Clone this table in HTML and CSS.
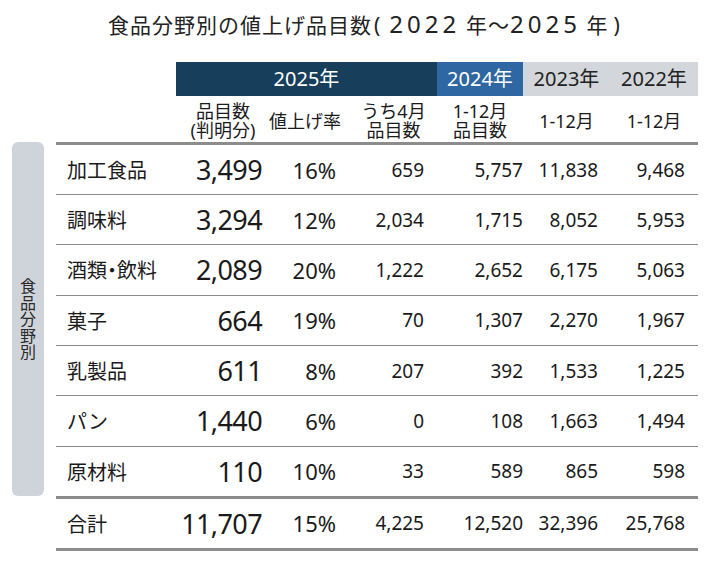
FILE: index.html
```html
<!DOCTYPE html>
<html lang="ja">
<head>
<meta charset="utf-8">
<title>食品分野別の値上げ品目数</title>
<link rel="stylesheet" href="styles.css">
</head>
<body>
<h1 class="title">食品分野別の値上げ品目数<span class="paren">(</span><span class="tnum">2022</span> 年～<span class="tnum">2025</span> 年<span class="paren">)</span></h1>
<div class="table">
  <div class="side"><span class="side-text">食品分野別</span></div>

  <div class="blank"></div>
  <div class="band band-dark">2025年</div>
  <div class="band band-blue">2024年</div>
  <div class="band band-gray">2023年</div>
  <div class="band band-gray">2022年</div>

  <div class="blank"></div>
  <div class="sub">品目数<br>(判明分)</div>
  <div class="sub sub-rate">値上げ率</div>
  <div class="sub">うち4月<br>品目数</div>
  <div class="sub">1-12月<br>品目数</div>
  <div class="sub">1-12月</div>
  <div class="sub">1-12月</div>

  <div class="cell label first">加工食品</div>
  <div class="cell big c1 first">3,499</div>
  <div class="cell pct c2 first">16%</div>
  <div class="cell num c3 first">659</div>
  <div class="cell num c4 first">5,757</div>
  <div class="cell num c5 first">11,838</div>
  <div class="cell num c6 first">9,468</div>

  <div class="cell label">調味料</div>
  <div class="cell big c1">3,294</div>
  <div class="cell pct c2">12%</div>
  <div class="cell num c3">2,034</div>
  <div class="cell num c4">1,715</div>
  <div class="cell num c5">8,052</div>
  <div class="cell num c6">5,953</div>

  <div class="cell label">酒類<span class="dot">・</span>飲料</div>
  <div class="cell big c1">2,089</div>
  <div class="cell pct c2">20%</div>
  <div class="cell num c3">1,222</div>
  <div class="cell num c4">2,652</div>
  <div class="cell num c5">6,175</div>
  <div class="cell num c6">5,063</div>

  <div class="cell label">菓子</div>
  <div class="cell big c1">664</div>
  <div class="cell pct c2">19%</div>
  <div class="cell num c3">70</div>
  <div class="cell num c4">1,307</div>
  <div class="cell num c5">2,270</div>
  <div class="cell num c6">1,967</div>

  <div class="cell label">乳製品</div>
  <div class="cell big c1">611</div>
  <div class="cell pct c2">8%</div>
  <div class="cell num c3">207</div>
  <div class="cell num c4">392</div>
  <div class="cell num c5">1,533</div>
  <div class="cell num c6">1,225</div>

  <div class="cell label">パン</div>
  <div class="cell big c1">1,440</div>
  <div class="cell pct c2">6%</div>
  <div class="cell num c3">0</div>
  <div class="cell num c4">108</div>
  <div class="cell num c5">1,663</div>
  <div class="cell num c6">1,494</div>

  <div class="cell label">原材料</div>
  <div class="cell big c1">110</div>
  <div class="cell pct c2">10%</div>
  <div class="cell num c3">33</div>
  <div class="cell num c4">589</div>
  <div class="cell num c5">865</div>
  <div class="cell num c6">598</div>

  <div class="cell label total total-label">合計</div>
  <div class="cell big c1 total">11,707</div>
  <div class="cell pct c2 total">15%</div>
  <div class="cell num c3 total">4,225</div>
  <div class="cell num c4 total">12,520</div>
  <div class="cell num c5 total">32,396</div>
  <div class="cell num c6 total">25,768</div>
</div>
</body>
</html>
```

FILE: styles.css
```css
* {
  box-sizing: border-box;
}

html, body {
  margin: 0;
  padding: 0;
  background: #ffffff;
}

body {
  font-family: "Noto Sans", "Noto Sans CJK JP", sans-serif;
  color: #1a1a1a;
  width: 719px;
  height: 577px;
  overflow: hidden;
}

.title {
  margin: 0 0 23px 0;
  padding: 9px 0 0 0;
  height: 39px;
  font-family: "Noto Sans CJK JP", sans-serif;
  font-weight: 400;
  font-size: 21px;
  line-height: 30px;
  letter-spacing: 1px;
  text-align: left;
  text-indent: 108px;
  color: #222;
  white-space: nowrap;
}

.paren {
  font-family: "Noto Sans", sans-serif;
  margin: 0 8px 0 2px;
}

.paren:last-child {
  margin: 0 0 0 5px;
}

.tnum {
  font-family: "Noto Sans", "Noto Sans CJK JP", sans-serif;
  font-size: 24px;
  letter-spacing: 4px;
}

.table {
  margin-left: 12px;
  display: grid;
  grid-template-columns: 44px 120px 94px 80px 87px 86px 87px 88px;
  grid-template-rows: 34px 46px 52px repeat(6, 50.33px) 55px;
}

.side {
  grid-column: 1;
  grid-row: 3 / 10;
  width: 32px;
  background: #cfd4db;
  border-radius: 6px;
  display: flex;
  align-items: center;
  justify-content: center;
}

.side-text {
  writing-mode: vertical-rl;
  font-family: "Noto Sans CJK JP", sans-serif;
  font-size: 16px;
  line-height: 16px;
  letter-spacing: 0.5px;
  color: #2a2a2a;
}

.blank {
  grid-column: span 2;
}

.band {
  display: flex;
  align-items: center;
  justify-content: center;
  font-size: 20px;
  line-height: 1;
}

.band-dark {
  grid-column: span 3;
  background: #173f5c;
  color: #ffffff;
}

.band-blue {
  background: #2e67a1;
  color: #ffffff;
}

.band-gray {
  background: #d3d6da;
  color: #222;
}

.sub {
  display: flex;
  align-items: center;
  justify-content: center;
  text-align: center;
  font-size: 18px;
  line-height: 19px;
  padding-top: 4px;
  color: #1a1a1a;
  white-space: nowrap;
}

.sub-rate {
  padding-right: 10px;
}

.cell {
  display: flex;
  align-items: center;
  justify-content: flex-end;
  border-top: 1px solid #8a8a8a;
  white-space: nowrap;
}

.cell.first,
.cell.total {
  border-top: 3px solid #8c8c8c;
}

.cell.total {
  border-bottom: 3px solid #8c8c8c;
}

.label {
  justify-content: flex-start;
  padding-left: 11px;
  font-family: "Noto Sans CJK JP", sans-serif;
  font-size: 20px;
}

.dot {
  font-feature-settings: "halt" 1;
}

.total-label {
  grid-column-start: 2;
}

.big {
  font-size: 27px;
  letter-spacing: -0.6px;
}

.pct {
  font-size: 22px;
}

.num {
  font-size: 19px;
}

.c1 { padding-right: 8px; }
.c2 { padding-right: 14px; }
.c3 { padding-right: 13px; }
.c4 { padding-right: 0; }
.c5 { padding-right: 12px; }
.c6 { padding-right: 13px; }
```
